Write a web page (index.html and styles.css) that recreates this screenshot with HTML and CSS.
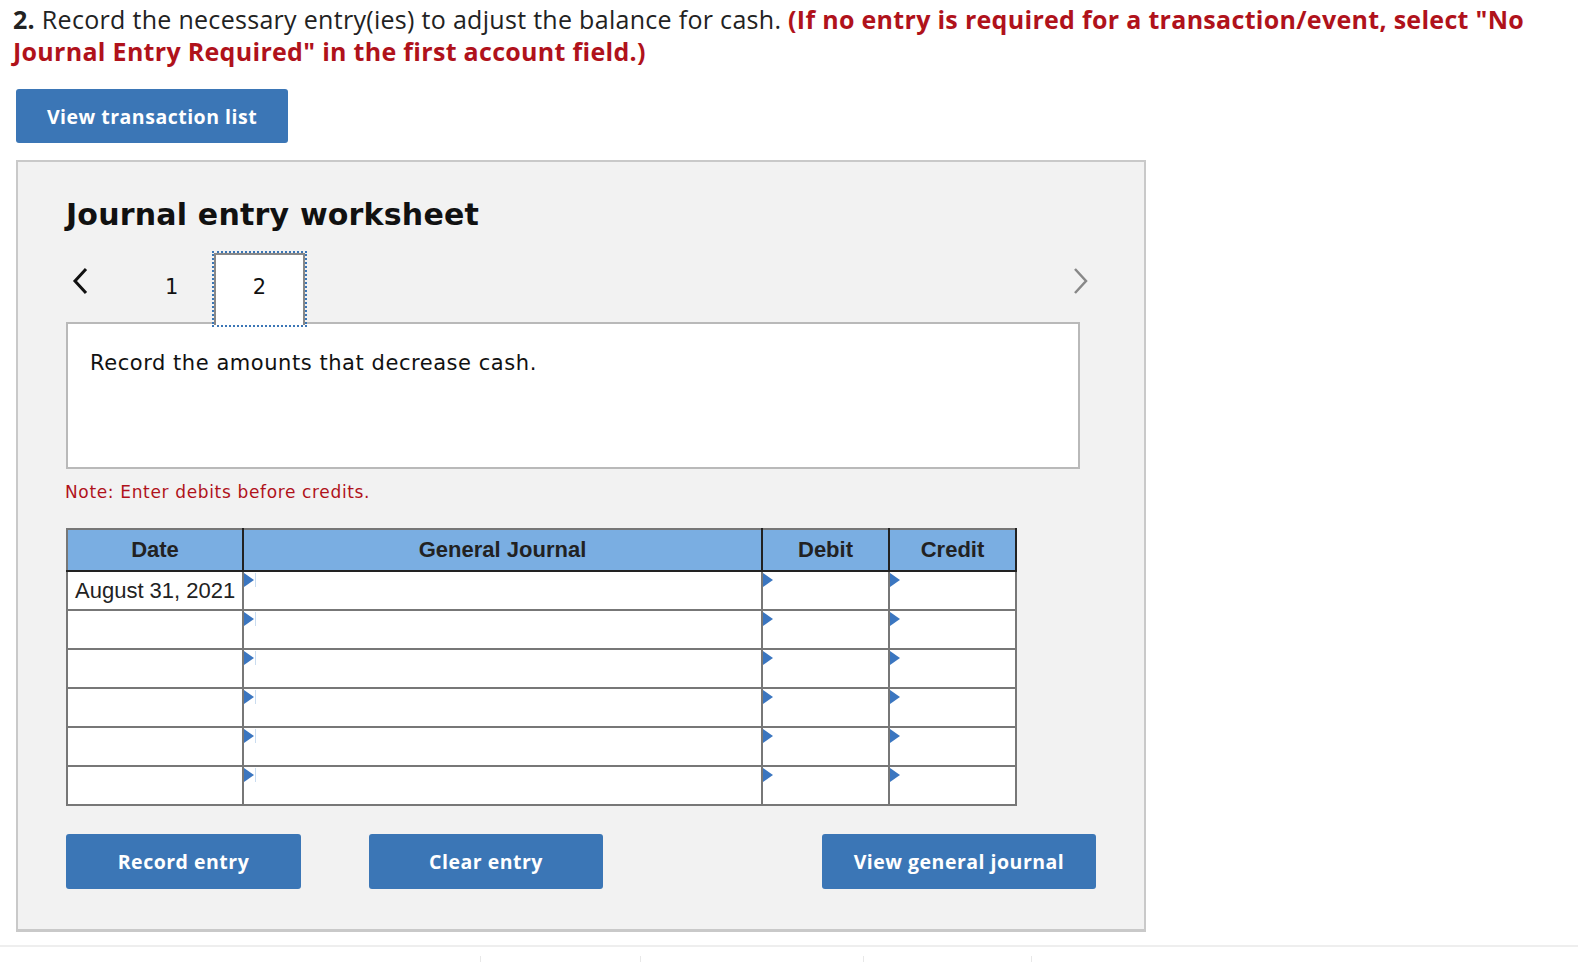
FILE: index.html
```html
<!DOCTYPE html>
<html lang="en">
<head>
    <meta charset="UTF-8">
    <title>Journal entry worksheet</title>
    <link rel="stylesheet" href="styles.css">
</head>
<body>
    <!-- question text -->
    <p class="question"><b>2.</b> Record the necessary entry(ies) to adjust the balance for cash. <span class="hint">(If no entry is required for a transaction/event, select "No Journal Entry Required" in the first account field.)</span></p>

    <button class="btn btn-list">View transaction list</button>

    <div class="panel">
        <h2 class="panel-title">Journal entry worksheet</h2>

        <div class="pager">
            <span class="arrow arrow-prev">
                <svg width="18" height="28" viewBox="0 0 18 28"><path d="M15 2 L4 14 L15 26" fill="none" stroke="#111" stroke-width="3"/></svg>
            </span>
            <span class="page first">1</span>
            <span class="page current">2</span>
            <span class="arrow arrow-next">
                <svg width="18" height="28" viewBox="0 0 18 28"><path d="M3 2 L14 14 L3 26" fill="none" stroke="#888" stroke-width="2.5"/></svg>
            </span>
        </div>

        <div class="task">Record the amounts that decrease cash.</div>

        <p class="note">Note: Enter debits before credits.</p>

        <table class="journal">
            <thead>
                <tr>
                    <th class="col-date">Date</th>
                    <th class="col-account">General Journal</th>
                    <th class="col-amt">Debit</th>
                    <th class="col-amt">Credit</th>
                </tr>
            </thead>
            <tbody>
                <tr>
                    <td>August 31, 2021</td>
                    <td class="mark acc"></td>
                    <td class="mark"></td>
                    <td class="mark"></td>
                </tr>
                <tr><td></td><td class="mark acc"></td><td class="mark"></td><td class="mark"></td></tr>
                <tr><td></td><td class="mark acc"></td><td class="mark"></td><td class="mark"></td></tr>
                <tr><td></td><td class="mark acc"></td><td class="mark"></td><td class="mark"></td></tr>
                <tr><td></td><td class="mark acc"></td><td class="mark"></td><td class="mark"></td></tr>
                <tr><td></td><td class="mark acc"></td><td class="mark"></td><td class="mark"></td></tr>
            </tbody>
        </table>

        <div class="actions">
            <button class="btn btn-record">Record entry</button>
            <button class="btn btn-clear">Clear entry</button>
            <button class="btn btn-journal">View general journal</button>
        </div>
    </div>

    <!-- bottom rule -->
    <div class="footer-rule">
        <span class="tick t1"></span>
        <span class="tick t2"></span>
        <span class="tick t3"></span>
        <span class="tick t4"></span>
    </div>
</body>
</html>
```

FILE: styles.css
```css
body {
    margin: 0;
    padding: 0;
    background: #fff;
    font-family: "Open Sans", Lato, sans-serif;
    color: #222;
}

.question {
    margin: 0;
    padding: 3px 20px 0 13px;
    font-size: 25px;
    line-height: 32px;
    color: #222;
    letter-spacing: 0.3px;
}
.question b {
    font-weight: 700;
}
.hint {
    color: #b0121b;
    font-weight: 700;
}

.btn {
    font-family: "Open Sans", Lato, sans-serif;
    background: #3b76b6;
    color: #fff;
    border: none;
    border-radius: 3px;
    font-size: 19.5px;
    font-weight: 700;
    cursor: pointer;
    letter-spacing: 0.5px;
}
.btn-list {
    display: block;
    margin: 22px 0 0 16px;
    width: 272px;
    height: 54px;
}

/* Worksheet panel */
.panel {
    margin: 17px 0 0 16px;
    width: 1130px;
    height: 772px;
    box-sizing: border-box;
    background: #f2f2f2;
    border: 2px solid #c9c9c9;
    border-bottom-width: 3px;
    padding: 0 0 0 48px;
}
.panel-title {
    margin: 31px 0 0 0;
    font-family: "DejaVu Sans", Verdana, sans-serif;
    font-size: 30px;
    font-weight: 700;
    color: #111;
    letter-spacing: 0.2px;
    line-height: 44px;
}

.pager {
    display: flex;
    align-items: flex-end;
    height: 71px;
    margin-top: 14px;
    width: 1024px;
    font-family: "DejaVu Sans", Verdana, sans-serif;
    font-size: 21px;
    color: #111;
}
.arrow {
    display: flex;
    align-items: center;
    height: 69px;
}
.arrow-prev {
    margin-left: 5px;
    margin-bottom: 7px;
}
.page {
    display: flex;
    align-items: center;
    justify-content: center;
    width: 87px;
    height: 69px;
    box-sizing: border-box;
    padding-bottom: 6px;
}
.page.first {
    margin-left: 76px;
    width: 32px;
    justify-content: flex-start;
    margin-right: 17px;
    padding-bottom: 2px;
}
.page.current {
    width: 91px;
    height: 72px;
    background: #fff;
    border: 2px solid #888;
    border-bottom: none;
    outline: 2px dotted #3b76b6;
    position: relative;
    z-index: 1;
    margin-bottom: -3px;
}
.arrow-next {
    margin-left: auto;
    margin-bottom: 7px;
}

.task {
    width: 1014px;
    height: 147px;
    box-sizing: border-box;
    background: #fff;
    border: 2px solid #b9b9b9;
    margin-top: 0;
    padding: 27px 22px 0;
    font-family: "DejaVu Sans", Verdana, sans-serif;
    font-size: 21px;
    letter-spacing: 0.55px;
    color: #111;
}

.note {
    margin: 13px 0 0 -1px;
    font-family: "DejaVu Sans", Verdana, sans-serif;
    font-size: 17px;
    letter-spacing: 0.65px;
    color: #b0121b;
}

/* Journal table */
.journal {
    margin-top: 26px;
    border-collapse: collapse;
    font-family: "Liberation Sans", Arial, sans-serif;
    font-size: 22px;
    background: #fff;
}
.journal th {
    background: #7aaee2;
    color: #222;
    font-weight: 700;
    height: 40px;
    border: 2px solid #222;
    border-top-color: #777;
    padding: 0;
}
.journal thead th:first-child {
    border-left-color: #777;
}
.journal td {
    height: 37px;
    border: 2px solid #777;
    padding: 0 0 0 7px;
    color: #222;
    vertical-align: middle;
}
.col-date { width: 174px; }
.col-account { width: 517px; }
.col-amt { width: 125px; }

.journal td.mark {
    position: relative;
}
.journal td.mark::before {
    content: "";
    position: absolute;
    left: 0;
    top: 1px;
    border-top: 7px solid transparent;
    border-bottom: 7px solid transparent;
    border-left: 10px solid #3b76c0;
}
.journal td.acc::after {
    content: "";
    position: absolute;
    left: 11px;
    top: 1px;
    width: 1px;
    height: 14px;
    background: #c9dcf0;
}

.actions {
    display: flex;
    margin-top: 28px;
}
.actions .btn {
    height: 55px;
}
.btn-record { width: 235px; }
.btn-clear { width: 234px; margin-left: 68px; }
.btn-journal { width: 274px; margin-left: 219px; }

.footer-rule {
    position: relative;
    margin-top: 13px;
    height: 22px;
    border-top: 2px solid #eeeeee;
}
.tick {
    position: absolute;
    top: 9px;
    width: 1px;
    height: 14px;
    background: #e8e8e8;
}
.t1 { left: 480px; }
.t2 { left: 640px; }
.t3 { left: 863px; }
.t4 { left: 1031px; }
```
